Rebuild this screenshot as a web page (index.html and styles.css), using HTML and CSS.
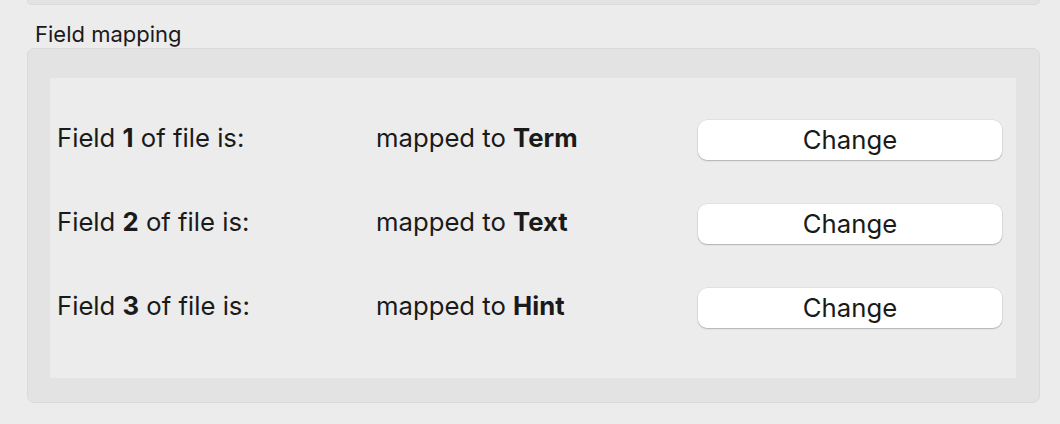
FILE: index.html
```html
<!DOCTYPE html>
<html>
<head>
<meta charset="utf-8">
<link rel="stylesheet" href="styles.css">
</head>
<body>
<div class="top-box"></div>
<div class="group-label">Field mapping</div>
<div class="group-box">
  <div class="panel">
    <div class="row">
      <div class="field">Field <b>1</b> of file is:</div>
      <div class="mapped">mapped to <b>Term</b></div>
      <button class="btn">Change</button>
    </div>
    <div class="row">
      <div class="field">Field <b>2</b> of file is:</div>
      <div class="mapped">mapped to <b>Text</b></div>
      <button class="btn">Change</button>
    </div>
    <div class="row">
      <div class="field">Field <b>3</b> of file is:</div>
      <div class="mapped">mapped to <b>Hint</b></div>
      <button class="btn">Change</button>
    </div>
  </div>
</div>
</body>
</html>
```
FILE: styles.css
```css
html, body {
  margin: 0;
  padding: 0;
  background: #ececec;
  font-family: "Inter", "Liberation Sans", sans-serif;
  color: #1a1a1a;
}

.top-box {
  margin-left: 27px;
  width: 1011px;
  height: 4px;
  background: #e3e3e3;
  border: 1px solid #dadada;
  border-top: none;
  border-radius: 0 0 7px 7px;
}

.group-label {
  margin: 16px 0 0 35px;
  height: 27px;
  font-size: 22px;
  line-height: 27px;
  color: #1a1a1a;
}

.group-box {
  box-sizing: border-box;
  margin-left: 27px;
  width: 1013px;
  height: 355px;
  background: #e3e3e3;
  border: 1px solid #dadada;
  border-radius: 7px;
  padding: 29px 23px 24px 22px;
}

.panel {
  box-sizing: border-box;
  height: 300px;
  background: #ececec;
  padding: 20px 14px 28px 7px;
  display: flex;
  flex-direction: column;
}

.row {
  height: 84px;
  display: grid;
  grid-template-columns: 319px 322px 304px;
  align-items: center;
}

.field, .mapped {
  font-size: 25.7px;
  line-height: 30px;
  padding-bottom: 4px;
  white-space: nowrap;
}

.field b, .mapped b {
  font-weight: 700;
}

.btn {
  height: 40px;
  width: 304px;
  border: none;
  border-radius: 9px;
  background: #ffffff;
  box-shadow: 0 1px 1.5px rgba(0, 0, 0, 0.22), 0 0 0 0.5px rgba(0, 0, 0, 0.08);
  font-family: "Inter", "Liberation Sans", sans-serif;
  font-size: 25.7px;
  color: #1a1a1a;
  padding: 0 0 2px 0;
}
```
